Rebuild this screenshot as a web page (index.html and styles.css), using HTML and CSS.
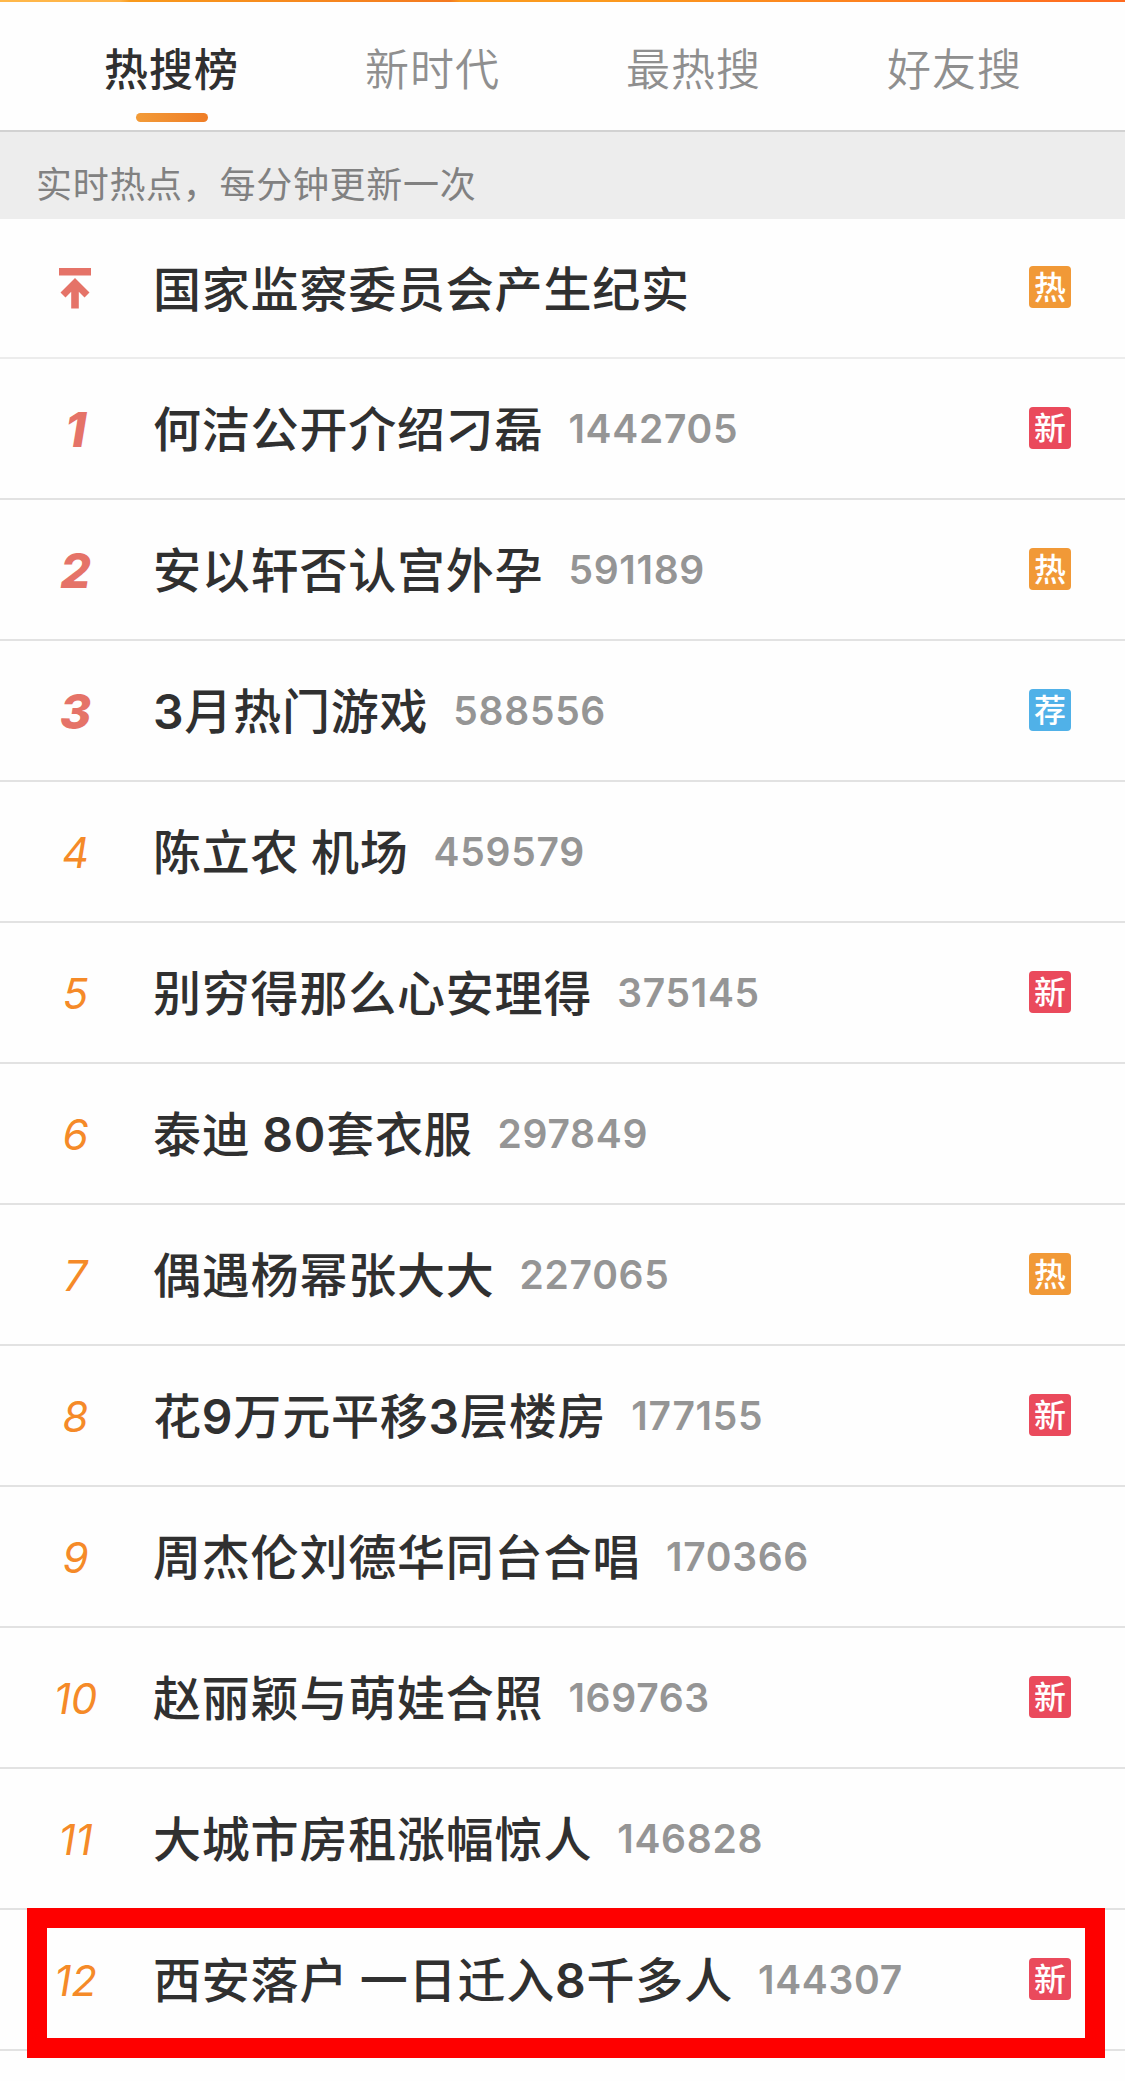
FILE: index.html
```html
<!DOCTYPE html>
<html lang="zh-CN">
<head>
    <meta charset="UTF-8">
    <meta name="viewport" content="width=device-width, initial-scale=1.0">
    <title>热搜榜</title>
    <link rel="stylesheet" href="styles.css">
</head>
<body>
    <div class="banner"></div>
    <nav class="tabs">
        <a class="tab active">热搜榜</a>
        <a class="tab">新时代</a>
        <a class="tab">最热搜</a>
        <a class="tab">好友搜</a>
    </nav>
    <div class="notice">实时热点，每分钟更新一次</div>
    <ul class="list">
        <li class="item pinned">
            <span class="rank">
                <svg class="top-icon" width="32" height="41" viewBox="0 0 32 41">
                    <path d="M0 0h32v7.5H0z" />
                    <path d="M16 10L30.500 24.500L25.500 29.500L19.800 23.800V40.500H12.200V23.800L6.500 29.500L1.500 24.500z" />
                </svg>
            </span>
            <span class="title">国家监察委员会产生纪实</span>
            <span class="badge hot">热</span>
        </li>
        <li class="item">
            <span class="rank top">1</span>
            <span class="title">何洁公开介绍刁磊</span>
            <span class="count">1442705</span>
            <span class="badge new">新</span>
        </li>
        <li class="item">
            <span class="rank top">2</span>
            <span class="title">安以轩否认宫外孕</span>
            <span class="count">591189</span>
            <span class="badge hot">热</span>
        </li>
        <li class="item">
            <span class="rank top">3</span>
            <span class="title"><b>3</b>月热门游戏</span>
            <span class="count">588556</span>
            <span class="badge rec">荐</span>
        </li>
        <li class="item">
            <span class="rank">4</span>
            <span class="title">陈立农 机场</span>
            <span class="count">459579</span>
        </li>
        <li class="item">
            <span class="rank">5</span>
            <span class="title">别穷得那么心安理得</span>
            <span class="count">375145</span>
            <span class="badge new">新</span>
        </li>
        <li class="item">
            <span class="rank">6</span>
            <span class="title">泰迪 <b>80</b>套衣服</span>
            <span class="count">297849</span>
        </li>
        <li class="item">
            <span class="rank">7</span>
            <span class="title">偶遇杨幂张大大</span>
            <span class="count">227065</span>
            <span class="badge hot">热</span>
        </li>
        <li class="item">
            <span class="rank">8</span>
            <span class="title">花<b>9</b>万元平移<b>3</b>层楼房</span>
            <span class="count">177155</span>
            <span class="badge new">新</span>
        </li>
        <li class="item">
            <span class="rank">9</span>
            <span class="title">周杰伦刘德华同台合唱</span>
            <span class="count">170366</span>
        </li>
        <li class="item">
            <span class="rank">10</span>
            <span class="title">赵丽颖与萌娃合照</span>
            <span class="count">169763</span>
            <span class="badge new">新</span>
        </li>
        <li class="item">
            <span class="rank">11</span>
            <span class="title">大城市房租涨幅惊人</span>
            <span class="count">146828</span>
        </li>
        <li class="item marked">
            <span class="rank">12</span>
            <span class="title">西安落户 一日迁入<b>8</b>千多人</span>
            <span class="count">144307</span>
            <span class="badge new">新</span>
        </li>
    </ul>
</body>
</html>
```
FILE: styles.css
```css
* {
    box-sizing: border-box;
}

body {
    margin: 0;
    height: 2081px;
    overflow: hidden;
    background-color: #fefefe;
    font-family: Inter, "Noto Sans CJK SC", sans-serif;
    color: #303030;
}

.banner {
    height: 2px;
    background: linear-gradient(to right, #ffb84a 0, #ffb347 120px, #f99a1c 130px, #f47a20 450px, #fb9a1e 460px, #fb9a1e 600px, #ff6a20 1125px);
}

.tabs {
    display: flex;
    height: 130px;
    padding: 0 40px 0 41px;
    border-bottom: 2px solid #d2d2d2;
}

.tab {
    display: flex;
    flex: 1;
    flex-direction: column;
    align-items: center;
    padding-top: 36px;
    font-size: 44px;
    line-height: 64px;
    letter-spacing: 1px;
    font-weight: 350;
    color: #8f8f8f;
}

.tab.active {
    font-weight: 500;
    color: #303030;
}

.tab.active::after {
    content: "";
    width: 72px;
    height: 9px;
    margin-top: 11px;
    border-radius: 5px;
    background: linear-gradient(to right, #f29b38, #ef7d26);
}

.notice {
    height: 87px;
    padding-left: 36px;
    font-size: 36px;
    line-height: 106px;
    letter-spacing: 0.7px;
    color: #818181;
    background-color: #ededed;
}

.list {
    margin: 0;
    padding: 0;
    list-style: none;
}

.item {
    display: flex;
    align-items: center;
    position: relative;
    height: 141px;
    padding: 1px 54px 0 0;
    border-bottom: 2px solid #e2e2e2;
}

.item.pinned {
    height: 140px;
    border-bottom-color: #ececec;
}

.rank {
    width: 153px;
    padding-right: 2px;
    text-align: center;
    font-size: 42px;
    font-style: italic;
    color: #f58a28;
}

.rank.top {
    font-size: 48px;
    font-weight: 800;
    color: #e57368;
}

.top-icon {
    display: block;
    margin: 0 auto 1px 59px;
    fill: #e57368;
}

.title {
    margin-top: 2px;
    font-size: 48px;
    font-weight: 500;
    line-height: 70px;
    letter-spacing: 0.8px;
    word-spacing: -2px;
    white-space: pre;
}

.title b {
    font-weight: 600;
    letter-spacing: 0.8px;
}

.count {
    margin: 0 0 1px 25px;
    font-size: 39px;
    font-weight: 600;
    letter-spacing: 0.7px;
    color: #959595;
}

.badge {
    width: 42px;
    height: 42px;
    margin: 0 0 3px auto;
    border-radius: 4px;
    font-size: 32px;
    font-weight: 500;
    line-height: 43px;
    text-align: center;
    color: #fff;
}

.hot {
    background-color: #f19937;
}

.new {
    background-color: #ea4a5c;
}

.rec {
    background-color: #50b1e8;
}

/* red frame around the highlighted entry */
.marked::after {
    content: "";
    box-sizing: border-box;
    position: absolute;
    top: -2px;
    left: 27px;
    width: 1078px;
    height: 150px;
    border: 20px solid #fe0000;
}
```
